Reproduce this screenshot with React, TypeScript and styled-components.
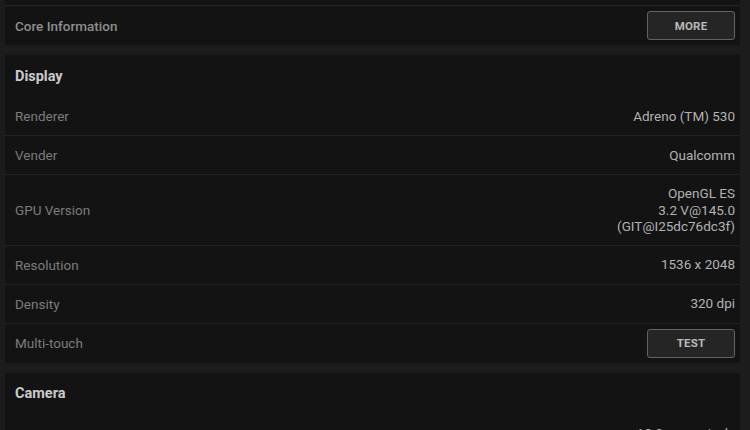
import styled, { createGlobalStyle } from 'styled-components';

const GlobalStyle = createGlobalStyle`
  html, body {
    margin: 0;
    padding: 0;
    background: #1c1c1c;
  }
  body {
    font-family: Roboto, "Liberation Sans", Arial, sans-serif;
    overflow: hidden;
  }
`;

const Page = styled.div`
  width: 750px;
  height: 430px;
  overflow: hidden;
  padding: 0 10px 0 5px;
  box-sizing: border-box;
  display: flex;
  flex-direction: column;
  gap: 10px;
`;

const Panel = styled.section`
  background: #131313;
  flex-shrink: 0;
`;

const PanelTitle = styled.h2`
  margin: 0;
  height: 42px;
  display: flex;
  align-items: center;
  padding: 0 10px;
  font-size: 14.5px;
  font-weight: 700;
  color: #cbcbcb;
`;

const Row = styled.div<{ $last?: boolean; $tall?: boolean }>`
  display: flex;
  align-items: center;
  justify-content: space-between;
  min-height: 39px;
  padding: ${(p) => (p.$tall ? '10px 5px 10px 10px' : '0 5px 0 10px')};
  box-sizing: border-box;
  border-bottom: ${(p) => (p.$last ? 'none' : '1px solid #232323')};
`;

const Stub = styled.div`
  height: 5px;
  border-bottom: 1px solid #262626;
`;

const Label = styled.span<{ $strong?: boolean }>`
  font-size: 13.5px;
  color: ${(p) => (p.$strong ? '#8e8e8e' : '#7c7c7c')};
  font-weight: ${(p) => (p.$strong ? 500 : 400)};
`;

const Value = styled.span`
  font-size: 13.5px;
  line-height: 16.5px;
  color: #b2b2b2;
  text-align: right;
  white-space: pre-line;
`;

const Button = styled.button`
  width: 88px;
  height: 29px;
  background: #252525;
  border: 1px solid #636363;
  border-radius: 3px;
  color: #bababa;
  font-family: inherit;
  font-size: 11.5px;
  font-weight: 700;
  letter-spacing: 0.2px;
  cursor: pointer;
`;

const displayRows: [string, string][] = [
  ['Renderer', 'Adreno (TM) 530'],
  ['Vender', 'Qualcomm'],
  ['GPU Version', 'OpenGL ES\n3.2 V@145.0\n(GIT@I25dc76dc3f)'],
  ['Resolution', '1536 x 2048'],
  ['Density', '320 dpi'],
];

export default function App() {
  return (
    <>
      <GlobalStyle />
      <Page>
        <Panel>
          <Stub />
          <Row $last>
            <Label $strong>Core Information</Label>
            <Button>MORE</Button>
          </Row>
        </Panel>

        <Panel>
          <PanelTitle>Display</PanelTitle>
          {displayRows.map(([label, value]) => (
            <Row key={label} $tall={value.includes('\n')}>
              <Label>{label}</Label>
              <Value>{value}</Value>
            </Row>
          ))}
          <Row $last>
            <Label>Multi-touch</Label>
            <Button>TEST</Button>
          </Row>
        </Panel>

        <Panel>
          <PanelTitle>Camera</PanelTitle>
          <Row $tall>
            <Label>Back Camera</Label>
            <Value>{'12.0 megapixels\n4032 x 3024\nAutofocus'}</Value>
          </Row>
        </Panel>
      </Page>
    </>
  );
}
